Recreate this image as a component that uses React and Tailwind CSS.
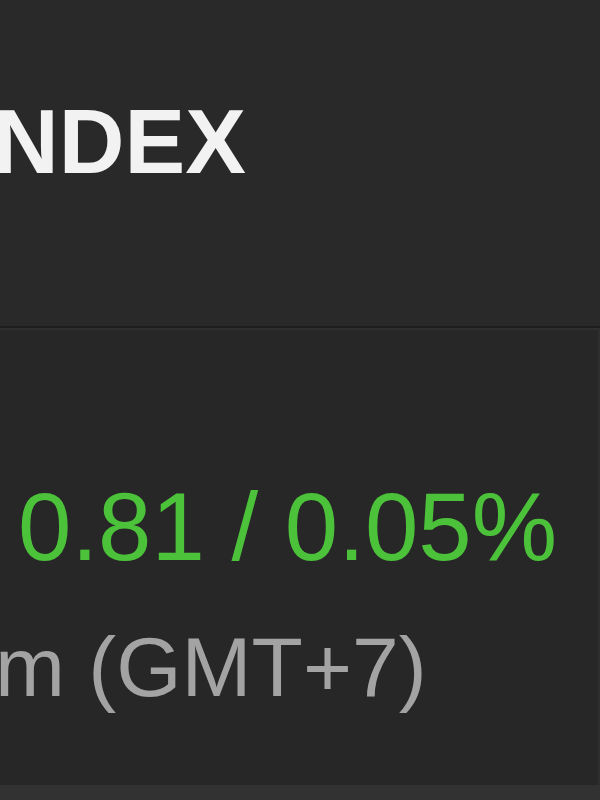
export default function App() {
  return (
    <div className="w-[600px] h-[800px] overflow-hidden flex flex-col bg-[#272727] font-['Liberation_Sans',Arial,sans-serif]">
      <div className="h-[326px] shrink-0 bg-[#292929] flex flex-col">
        <div className="pt-[82px] text-[91px] leading-[120px] font-bold text-[#f2f2f2] -ml-[7px]">
          NDEX
        </div>
      </div>
      <div className="h-[2px] bg-[#1e1e1e] shrink-0" />
      <div className="h-[2px] bg-[#2f2f2f] shrink-0" />
      <div className="flex-1 flex flex-col border-r-[2px] border-[#2e2e2e]">
        <div className="pt-[142px] text-[96px] leading-[110px] text-[#4cc23b] ml-[18px] whitespace-nowrap">
          0.81 / 0.05%
        </div>
        <div className="pt-[35px] text-[84px] leading-[100px] text-[#a3a3a3] -ml-[5px] whitespace-nowrap">
          m (GMT+7)
        </div>
      </div>
      <div className="h-[15px] bg-[#323232] shrink-0" />
    </div>
  );
}
